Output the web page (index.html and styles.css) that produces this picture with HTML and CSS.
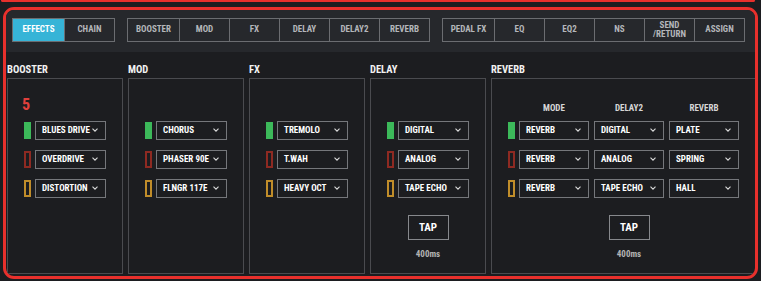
FILE: index.html
```html
<!DOCTYPE html>
<html lang="en">
<head>
  <meta charset="UTF-8">
  <title>Effects</title>
  <link rel="stylesheet" href="styles.css">
</head>
<body>

<div class="prev-frame"></div>

<div class="frame">
  <div class="topbar">
    <div class="tab-group">
      <div class="tab active">EFFECTS</div>
      <div class="tab">CHAIN</div>
    </div>
    <div class="tab-group">
      <div class="tab">BOOSTER</div>
      <div class="tab">MOD</div>
      <div class="tab">FX</div>
      <div class="tab">DELAY</div>
      <div class="tab">DELAY2</div>
      <div class="tab">REVERB</div>
    </div>
    <div class="tab-group">
      <div class="tab">PEDAL FX</div>
      <div class="tab">EQ</div>
      <div class="tab">EQ2</div>
      <div class="tab">NS</div>
      <div class="tab two-line">SEND<br>/RETURN</div>
      <div class="tab">ASSIGN</div>
    </div>
  </div>

  <div class="sections">
    <section class="section">
      <h2>BOOSTER</h2>
      <div class="panel">
        <span class="annot">5</span>
        <div class="row"><span class="led on"></span><div class="select"><span>BLUES DRIVE</span><svg viewBox="0 0 6 4"><polyline points="0.5,0.6 3,3.2 5.5,0.6"/></svg></div></div>
        <div class="row"><span class="led red"></span><div class="select"><span>OVERDRIVE</span><svg viewBox="0 0 6 4"><polyline points="0.5,0.6 3,3.2 5.5,0.6"/></svg></div></div>
        <div class="row"><span class="led amber"></span><div class="select"><span>DISTORTION</span><svg viewBox="0 0 6 4"><polyline points="0.5,0.6 3,3.2 5.5,0.6"/></svg></div></div>
      </div>
    </section>

    <section class="section">
      <h2>MOD</h2>
      <div class="panel">
        <div class="row"><span class="led on"></span><div class="select"><span>CHORUS</span><svg viewBox="0 0 6 4"><polyline points="0.5,0.6 3,3.2 5.5,0.6"/></svg></div></div>
        <div class="row"><span class="led red"></span><div class="select"><span>PHASER 90E</span><svg viewBox="0 0 6 4"><polyline points="0.5,0.6 3,3.2 5.5,0.6"/></svg></div></div>
        <div class="row"><span class="led amber"></span><div class="select"><span>FLNGR 117E</span><svg viewBox="0 0 6 4"><polyline points="0.5,0.6 3,3.2 5.5,0.6"/></svg></div></div>
      </div>
    </section>

    <section class="section">
      <h2>FX</h2>
      <div class="panel">
        <div class="row"><span class="led on"></span><div class="select"><span>TREMOLO</span><svg viewBox="0 0 6 4"><polyline points="0.5,0.6 3,3.2 5.5,0.6"/></svg></div></div>
        <div class="row"><span class="led red"></span><div class="select"><span>T.WAH</span><svg viewBox="0 0 6 4"><polyline points="0.5,0.6 3,3.2 5.5,0.6"/></svg></div></div>
        <div class="row"><span class="led amber"></span><div class="select"><span>HEAVY OCT</span><svg viewBox="0 0 6 4"><polyline points="0.5,0.6 3,3.2 5.5,0.6"/></svg></div></div>
      </div>
    </section>

    <section class="section">
      <h2>DELAY</h2>
      <div class="panel">
        <div class="row"><span class="led on"></span><div class="select"><span>DIGITAL</span><svg viewBox="0 0 6 4"><polyline points="0.5,0.6 3,3.2 5.5,0.6"/></svg></div></div>
        <div class="row"><span class="led red"></span><div class="select"><span>ANALOG</span><svg viewBox="0 0 6 4"><polyline points="0.5,0.6 3,3.2 5.5,0.6"/></svg></div></div>
        <div class="row"><span class="led amber"></span><div class="select"><span>TAPE ECHO</span><svg viewBox="0 0 6 4"><polyline points="0.5,0.6 3,3.2 5.5,0.6"/></svg></div></div>
        <div class="tap-wrap">
          <div class="tap">TAP</div>
          <div class="tap-time">400ms</div>
        </div>
      </div>
    </section>

    <section class="section section-reverb">
      <h2>REVERB</h2>
      <div class="panel panel-reverb">
        <div class="rev-head">
          <span>MODE</span>
          <span>DELAY2</span>
          <span>REVERB</span>
        </div>
        <div class="row">
          <span class="led on"></span>
          <div class="selects">
            <div class="select"><span>REVERB</span><svg viewBox="0 0 6 4"><polyline points="0.5,0.6 3,3.2 5.5,0.6"/></svg></div>
            <div class="select"><span>DIGITAL</span><svg viewBox="0 0 6 4"><polyline points="0.5,0.6 3,3.2 5.5,0.6"/></svg></div>
            <div class="select"><span>PLATE</span><svg viewBox="0 0 6 4"><polyline points="0.5,0.6 3,3.2 5.5,0.6"/></svg></div>
          </div>
        </div>
        <div class="row">
          <span class="led red"></span>
          <div class="selects">
            <div class="select"><span>REVERB</span><svg viewBox="0 0 6 4"><polyline points="0.5,0.6 3,3.2 5.5,0.6"/></svg></div>
            <div class="select"><span>ANALOG</span><svg viewBox="0 0 6 4"><polyline points="0.5,0.6 3,3.2 5.5,0.6"/></svg></div>
            <div class="select"><span>SPRING</span><svg viewBox="0 0 6 4"><polyline points="0.5,0.6 3,3.2 5.5,0.6"/></svg></div>
          </div>
        </div>
        <div class="row">
          <span class="led amber"></span>
          <div class="selects">
            <div class="select"><span>REVERB</span><svg viewBox="0 0 6 4"><polyline points="0.5,0.6 3,3.2 5.5,0.6"/></svg></div>
            <div class="select"><span>TAPE ECHO</span><svg viewBox="0 0 6 4"><polyline points="0.5,0.6 3,3.2 5.5,0.6"/></svg></div>
            <div class="select"><span>HALL</span><svg viewBox="0 0 6 4"><polyline points="0.5,0.6 3,3.2 5.5,0.6"/></svg></div>
          </div>
        </div>
        <div class="tap-wrap tap-wrap-reverb">
          <div class="tap">TAP</div>
          <div class="tap-time">400ms</div>
        </div>
      </div>
    </section>
  </div>
</div>

</body>
</html>
```

FILE: styles.css
```css
:root {
  --frame-red: #e8302c;
  --bar-bg: #26282c;
  --content-bg: #1c1d20;
  --panel-line: #4a4b4f;
  --select-line: #75777b;
  --cyan: #36b4d7;
}
* { margin: 0; padding: 0; box-sizing: border-box; }
body {
  font-family: "Roboto Condensed", Roboto, "Liberation Sans", sans-serif;
  font-weight: 700;
  background: #1c1d20;
  color: #fff;
  width: 761px;
  height: 281px;
  overflow: hidden;
}

/* bottom edge of the frame above */
.prev-frame {
  height: 1px;
  margin: 0 6px 0 1px;
  border: 2.5px solid var(--frame-red);
  border-top: none;
  border-radius: 0 0 9px 9px;
}

.frame {
  margin: 4.5px 3px 0 3px;
  height: 272px;
  border: 3px solid var(--frame-red);
  border-radius: 11px;
  overflow: hidden;
  background: var(--content-bg);
}

.topbar {
  height: 42px;
  background: var(--bar-bg);
  display: flex;
  gap: 12px;
  padding: 8px 0 0 6px;
}
.tab-group {
  display: flex;
  height: 24px;
  border: 1px solid #6b6d71;
}
.tab {
  width: 50px;
  display: flex;
  align-items: center;
  justify-content: center;
  text-align: center;
  font-size: 9px;
  line-height: 9px;
  color: #b4b6ba;
  border-left: 1px solid #6b6d71;
}
.tab:first-child { border-left: none; width: 51px; }
.tab.active { background: var(--cyan); color: #fff; }
.tab.two-line { line-height: 8.5px; }

.sections {
  display: flex;
  gap: 5px;
  padding: 12px 0 0 1px;
}
.section { width: 116px; flex: none; }
.section-reverb { flex: 1; margin-right: -12px; }
.section h2 {
  font-size: 10.5px;
  line-height: 11px;
  color: #f2f2f2;
  margin-bottom: 3px;
}

.panel {
  position: relative;
  height: 196px;
  border: 1px solid var(--panel-line);
  padding-top: 42px;
  display: flex;
  flex-direction: column;
  align-items: center;
}
.panel-reverb {
  padding: 24px 0 0 16px;
  align-items: flex-start;
}

.annot {
  position: absolute;
  left: 14px;
  top: 18px;
  font-size: 16px;
  line-height: 16px;
  color: #e2403c;
}

.row {
  display: flex;
  align-items: center;
  gap: 4px;
  height: 19px;
  margin-bottom: 10px;
}
.led {
  width: 7px;
  height: 17px;
}
.led.on { background: #3cb95a; }
.led.red { border: 2px solid #8e2a22; }
.led.amber { border: 2px solid #c08d2a; }

.selects { display: flex; gap: 5px; }
.select {
  width: 71px;
  height: 19px;
  border: 1px solid var(--select-line);
  display: flex;
  align-items: center;
  justify-content: space-between;
  padding: 0 7px 0 6px;
  font-size: 9px;
  white-space: nowrap;
  overflow: hidden;
}
.selects .select { width: 70px; }
.select svg {
  width: 6px;
  height: 4px;
  flex: none;
  fill: none;
  stroke: #d8d8d8;
  stroke-width: 1.1;
}

.rev-head {
  display: flex;
  gap: 5px;
  margin: 0 0 8px 11px;
}
.rev-head span {
  width: 70px;
  text-align: center;
  font-size: 9px;
  line-height: 10px;
  color: #d6d6d6;
}

.tap-wrap {
  margin-top: 7px;
  display: flex;
  flex-direction: column;
  align-items: center;
}
.tap-wrap-reverb {
  width: 220px;
  margin-left: 11px;
}
.tap {
  width: 41px;
  height: 25px;
  border: 1px solid #86888c;
  display: flex;
  align-items: center;
  justify-content: center;
  font-size: 11px;
}
.tap-time {
  margin-top: 9px;
  font-size: 9px;
  line-height: 10px;
  color: #b3b3b3;
}
```
